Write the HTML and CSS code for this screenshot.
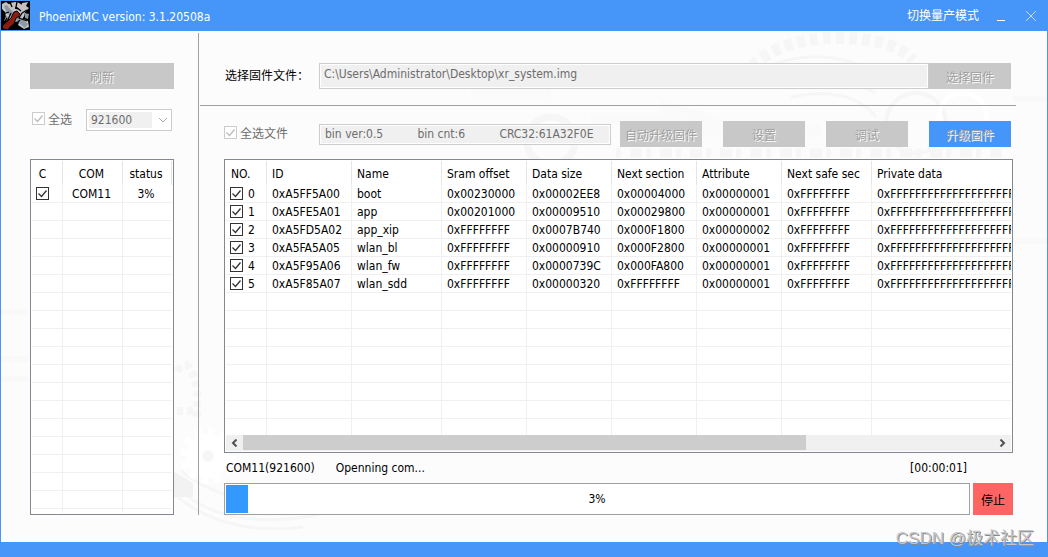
FILE: index.html
```html
<!DOCTYPE html>
<html lang="zh-CN">
<head>
<meta charset="utf-8">
<title>PhoenixMC</title>
<link rel="stylesheet" href="styles.css">
</head>
<body>
<div class="window">
  <header class="titlebar">
    <svg class="app-icon" viewBox="0 0 29 29" aria-hidden="true">
      <rect width="29" height="29" fill="#000"/>
      <circle cx="14" cy="11" r="10" fill="#c4c4c4"/>
      <path d="M1 3l4-2 4 3-1 5-4 2-3-3zM21 2l6-1-2 4 3 2-4 4-4-2zM20 17l7 3 1 6-5 2-6-4z" fill="#bfc3c8"/>
      <path d="M3 5l3-1 2 3 19 16-3 4L6 12zM5 15l3 1-1 3-4 1zM24 12l4 1-1 5-3-1z" fill="#8d97a5"/>
      <path d="M9 1l2 5M16 1l-1 5 5 4M2 13l6-2M10 12l-4 9M21 12l-3 5 8 3M12 26l7-7M14 7l4 1M26 9l-5 3M3 22l3-5" stroke="#000" stroke-width="1.3" fill="none"/>
      <path d="M2 28L1 25 10 17l3-6 3-1 3 3-2 3-2 1-2 6-4 3-2 3z" fill="#8e1b10" stroke="#000"/>
    </svg>
    <h1 class="title">PhoenixMC version: 3.1.20508a</h1>
    <button class="title-btn mode" type="button">切换量产模式</button>
    <button class="title-btn" type="button" aria-label="最小化">
      <svg width="12" height="12" viewBox="0 0 12 12"><path d="M2 10.5h8" stroke="#fff"/></svg>
    </button>
    <button class="title-btn" type="button" aria-label="关闭">
      <svg width="12" height="12" viewBox="0 0 12 12"><path d="M1 1l10 10M11 1L1 11" stroke="#c9d8ea" fill="none"/></svg>
    </button>
  </header>

  <main class="main">
    <svg class="backdrop" viewBox="0 0 1046 511" preserveAspectRatio="xMidYMid slice" aria-hidden="true">
      <g fill="none" stroke="#f6f6f6">
        <path d="M742 45q30-38 95-38 55 0 75 22" stroke-width="12" stroke-dasharray="8 5"/>
        <path d="M770 34q50-18 95 3M790 66q60-12 85 20M745 52q70-22 130 10" stroke-width="3"/>
        <circle cx="915" cy="92" r="30" stroke-width="4"/>
        <circle cx="962" cy="86" r="24" stroke-width="5" stroke="#fff"/>
        <circle cx="550" cy="110" r="24" stroke-width="7"/>
        <path d="M440 38h120M470 60h80M590 88h90M660 74l60 20M700 100h120" stroke-width="12" stroke="#fafafa"/>
        <path d="M615 122h390" stroke-width="9" stroke-dasharray="5 9 12 4"/>
        <path d="M172 452q45 50 145 32M172 462q50 44 130 34M180 440q40 32 110 34" stroke-width="3"/>
        <path d="M176 340q14-18 20 20v30M176 380h18" stroke-width="8" stroke-dasharray="6 4"/>
        <circle cx="207" cy="425" r="14" stroke-width="16" stroke="#fff"/>
        <circle cx="207" cy="425" r="25" stroke-width="6" stroke="#fff" stroke-dasharray="7 6"/>
        <circle cx="207" cy="425" r="5" fill="#f6f6f6"/>
        <path d="M172 440l20 12v14h-20z" fill="#f2f2f2" stroke="none"/>
        <path d="M0 281h28M0 328h28M0 348h28M1012 68h34M1012 210h34" stroke-width="6" stroke="#f9f9f9"/>
      </g>
    </svg>

    <aside class="sidebar">
      <button class="btn" type="button" disabled>刷新</button>
      <div class="port-row">
        <label class="check"><input type="checkbox" checked disabled>全选</label>
        <select class="baud" aria-label="波特率" disabled><option>921600</option></select>
      </div>
      <div class="list">
        <div class="viewport">
          <table class="grid ports">
            <colgroup><col class="c-check"><col class="c-com"><col></colgroup>
            <thead><tr><th>C</th><th>COM</th><th>status</th></tr></thead>
            <tbody>
              <tr><td><input type="checkbox" aria-label="COM11" checked></td><td>COM11</td><td>3%</td></tr>
              <tr><td></td><td></td><td></td></tr><tr><td></td><td></td><td></td></tr>
              <tr><td></td><td></td><td></td></tr><tr><td></td><td></td><td></td></tr>
              <tr><td></td><td></td><td></td></tr><tr><td></td><td></td><td></td></tr>
              <tr><td></td><td></td><td></td></tr><tr><td></td><td></td><td></td></tr>
              <tr><td></td><td></td><td></td></tr><tr><td></td><td></td><td></td></tr>
              <tr><td></td><td></td><td></td></tr><tr><td></td><td></td><td></td></tr>
              <tr><td></td><td></td><td></td></tr><tr><td></td><td></td><td></td></tr>
              <tr><td></td><td></td><td></td></tr><tr><td></td><td></td><td></td></tr>
              <tr><td></td><td></td><td></td></tr><tr><td></td><td></td><td></td></tr>
            </tbody>
          </table>
        </div>
      </div>
    </aside>

    <section class="content">
      <div class="file-row">
        <label class="file-label" for="path">选择固件文件：</label>
        <input class="field path" id="path" type="text" value="C:\Users\Administrator\Desktop\xr_system.img" disabled>
        <button class="btn tool" type="button" disabled>选择固件</button>
      </div>

      <div class="work">
        <div class="tools">
          <label class="check all-files"><input type="checkbox" checked disabled>全选文件</label>
          <input class="field info" type="text" aria-label="固件信息" value="bin ver:0.5          bin cnt:6          CRC32:61A32F0E" disabled>
          <div class="actions">
            <button class="btn tool" type="button" disabled>自动升级固件</button>
            <button class="btn tool" type="button" disabled>设置</button>
            <button class="btn tool" type="button" disabled>调试</button>
            <button class="btn tool primary" type="button" disabled>升级固件</button>
          </div>
        </div>

        <div class="list">
          <div class="viewport">
            <table class="grid files">
              <colgroup><col class="c-no"><col class="c-std"><col class="c-wide"><col class="c-std"><col class="c-std"><col class="c-std"><col class="c-std"><col class="c-wide"><col></colgroup>
              <thead><tr><th>NO.</th><th>ID</th><th>Name</th><th>Sram offset</th><th>Data size</th><th>Next section</th><th>Attribute</th><th>Next safe sec</th><th>Private data</th></tr></thead>
              <tbody>
                <tr><td><label class="num"><input type="checkbox" checked>0</label></td><td>0xA5FF5A00</td><td>boot</td><td>0x00230000</td><td>0x00002EE8</td><td>0x00004000</td><td>0x00000001</td><td>0xFFFFFFFF</td><td>0xFFFFFFFFFFFFFFFFFFFF</td></tr>
                <tr><td><label class="num"><input type="checkbox" checked>1</label></td><td>0xA5FE5A01</td><td>app</td><td>0x00201000</td><td>0x00009510</td><td>0x00029800</td><td>0x00000001</td><td>0xFFFFFFFF</td><td>0xFFFFFFFFFFFFFFFFFFFF</td></tr>
                <tr><td><label class="num"><input type="checkbox" checked>2</label></td><td>0xA5FD5A02</td><td>app_xip</td><td>0xFFFFFFFF</td><td>0x0007B740</td><td>0x000F1800</td><td>0x00000002</td><td>0xFFFFFFFF</td><td>0xFFFFFFFFFFFFFFFFFFFF</td></tr>
                <tr><td><label class="num"><input type="checkbox" checked>3</label></td><td>0xA5FA5A05</td><td>wlan_bl</td><td>0xFFFFFFFF</td><td>0x00000910</td><td>0x000F2800</td><td>0x00000001</td><td>0xFFFFFFFF</td><td>0xFFFFFFFFFFFFFFFFFFFF</td></tr>
                <tr><td><label class="num"><input type="checkbox" checked>4</label></td><td>0xA5F95A06</td><td>wlan_fw</td><td>0xFFFFFFFF</td><td>0x0000739C</td><td>0x000FA800</td><td>0x00000001</td><td>0xFFFFFFFF</td><td>0xFFFFFFFFFFFFFFFFFFFF</td></tr>
                <tr><td><label class="num"><input type="checkbox" checked>5</label></td><td>0xA5F85A07</td><td>wlan_sdd</td><td>0xFFFFFFFF</td><td>0x00000320</td><td>0xFFFFFFFF</td><td>0x00000001</td><td>0xFFFFFFFF</td><td>0xFFFFFFFFFFFFFFFFFFFF</td></tr>
                <tr><td></td><td></td><td></td><td></td><td></td><td></td><td></td><td></td><td></td></tr>
                <tr><td></td><td></td><td></td><td></td><td></td><td></td><td></td><td></td><td></td></tr>
                <tr><td></td><td></td><td></td><td></td><td></td><td></td><td></td><td></td><td></td></tr>
                <tr><td></td><td></td><td></td><td></td><td></td><td></td><td></td><td></td><td></td></tr>
                <tr><td></td><td></td><td></td><td></td><td></td><td></td><td></td><td></td><td></td></tr>
                <tr><td></td><td></td><td></td><td></td><td></td><td></td><td></td><td></td><td></td></tr>
                <tr><td></td><td></td><td></td><td></td><td></td><td></td><td></td><td></td><td></td></tr>
                <tr><td></td><td></td><td></td><td></td><td></td><td></td><td></td><td></td><td></td></tr>
              </tbody>
            </table>
          </div>
          <div class="scrollbar">
            <button class="arrow" type="button" aria-label="向左滚动"><svg width="7" height="8" viewBox="0 0 7 8"><path d="M5.500 .5L2 4l3.500 3.500" fill="none" stroke="#505050" stroke-width="2"/></svg></button>
            <div class="track"><div class="thumb"></div></div>
            <button class="arrow" type="button" aria-label="向右滚动"><svg width="7" height="8" viewBox="0 0 7 8"><path d="M1.500 .5L5 4 1.500 7.500" fill="none" stroke="#505050" stroke-width="2"/></svg></button>
          </div>
        </div>

        <div class="status">
          <span>COM11(921600)</span>
          <span>Openning com...</span>
          <span class="elapsed">[00:00:01]</span>
        </div>
        <div class="run-row">
          <div class="progress" role="progressbar" aria-label="进度" aria-valuenow="3" aria-valuemin="0" aria-valuemax="100">
            <div class="bar" style="width: 3%"></div>
            <span class="percent">3%</span>
          </div>
          <button class="stop" type="button">停止</button>
        </div>
      </div>
    </section>
  </main>
  <footer class="bottom-bar"></footer>
  <div class="watermark">CSDN @极术社区</div>
</div>
</body>
</html>
```

FILE: styles.css
```css
* { box-sizing: border-box; }

body {
  margin: 0;
  font: 12px/16px "DejaVu Sans Condensed", "Noto Sans", "Noto Sans CJK SC", sans-serif;
  color: #000;
}

button, input, select { font: inherit; margin: 0; }

.window {
  position: relative;
  display: flex;
  flex-direction: column;
  height: 100vh;
  min-height: 360px;
  background: #4696fa;
}

/* Title bar */
.titlebar {
  display: flex;
  align-items: center;
  height: 31px;
  padding: 0 11px 0 1px;
  color: #fff;
}
.app-icon { width: 29px; height: 29px; }
.title { flex: 1; margin: 2px 0 0 9px; font-size: 12px; font-weight: normal; }
.title-btn {
  display: flex;
  margin-left: 18px;
  padding: 0;
  border: 0;
  background: none;
  color: #fff;
}
.title-btn.mode { margin-left: 0; }
.title-btn.mode + .title-btn { margin-left: 16px; }

/* Body */
.main {
  position: relative;
  display: flex;
  flex: 1;
  min-height: 0;
  margin: 0 1px;
  padding: 2px 0 27px;
  background: #fcfcfc;
}
.backdrop { position: absolute; inset: 0; width: 100%; height: 100%; }
.sidebar, .content { position: relative; display: flex; flex-direction: column; }
.sidebar {
  width: 198px;
  flex: none;
  padding: 30px 24px 0 29px;
  border-right: 1px solid #a0a0a0;
}
.content { flex: 1; min-width: 0; }

.btn {
  flex: none;
  height: 26px;
  padding: 4px 0 0;
  border: 0;
  background: #c8c8c8;
  color: #a0a0a0;
  text-shadow: 1px 1px #fff;
}
.tool { width: 82px; }
.primary { background: #4696fa; }

input[type="checkbox"] {
  flex: none;
  appearance: none;
  width: 13px;
  height: 13px;
  border: 1px solid #333;
  background: #fff url("data:image/svg+xml,%3Csvg xmlns='http://www.w3.org/2000/svg' viewBox='0 0 11 11'%3E%3Cpath d='M1.500 5.500l3 3 5-6' fill='none' stroke='%23333' stroke-width='1.300'/%3E%3C/svg%3E");
}
input[type="checkbox"]:disabled {
  border-color: #ccc;
  background-image: url("data:image/svg+xml,%3Csvg xmlns='http://www.w3.org/2000/svg' viewBox='0 0 11 11'%3E%3Cpath d='M1.500 5.500l3 3 5-6' fill='none' stroke='%23bbb' stroke-width='1.300'/%3E%3C/svg%3E");
}

.check { display: flex; align-items: center; gap: 3px; color: #6d6d6d; }
.check input { margin-bottom: 4px; }

.port-row {
  display: flex;
  align-items: center;
  justify-content: space-between;
  margin: 20px 2px 28px;
}
.baud {
  appearance: none;
  width: 86px;
  height: 22px;
  padding: 0 4px;
  border: 1px solid #ccc;
  border-radius: 0;
  background:
    url("data:image/svg+xml,%3Csvg xmlns='http://www.w3.org/2000/svg' width='10' height='6'%3E%3Cpath d='M1 1l4 4 4-4' fill='none' stroke='%23aaa'/%3E%3C/svg%3E") right 3px center no-repeat,
    linear-gradient(#f0f0f0, #f0f0f0) 2px 2px / 63px 16px no-repeat,
    #fff;
  color: #6d6d6d;
  opacity: 1;
}

/* Rows of controls */
.file-row {
  display: flex;
  align-items: center;
  margin: 0 31px 0 1px;
  padding: 30px 5px 16px 25px;
  border-bottom: 1px solid #a0a0a0;
}
.file-label { width: 94px; white-space: nowrap; }
.field {
  min-width: 0;
  border: 1px solid #ccc;
  border-radius: 0;
  outline: 1px solid #fff;
  outline-offset: -2px;
  background: #f0f0f0;
  color: #6d6d6d;
}
.path { flex: 1; height: 26px; padding: 0 4px 4px; }
.info { flex: 1; height: 21px; padding: 0 5px; }

.work {
  display: flex;
  flex: 1;
  flex-direction: column;
  min-height: 0;
  padding: 15px 34px 0 25px;
}
.tools { display: flex; align-items: center; margin: 0 2px 12px 0; }
.all-files { width: 95px; }
.actions { display: flex; gap: 21px; margin-left: 9px; }

/* Lists */
.list {
  display: flex;
  flex: 1;
  flex-direction: column;
  min-height: 0;
  padding: 1px;
  border: 1px solid #828790;
  background: #fff;
}
.viewport { flex: 1; min-height: 0; overflow: hidden; }
.grid { width: 100%; table-layout: fixed; border-collapse: separate; border-spacing: 0; line-height: 15px; }
.grid th, .grid td {
  overflow: hidden;
  padding: 2px 0 0 5px;
  border-right: 1px solid #f0f0f0;
  text-align: left;
  font-weight: normal;
  white-space: nowrap;
}
.grid th { height: 24px; padding-top: 3px; border-color: #e5e5e5; }
.grid td { height: 18px; border-bottom: 1px solid #f0f0f0; }
.files th:last-child, .files td:last-child { border-right: 0; }
.ports td:last-child { border-right-color: transparent; }
.grid.ports th, .grid.ports td { padding-left: 0; padding-right: 2px; text-align: center; }
.grid.ports th:first-child, .grid.ports td:first-child { padding-right: 9px; }
.ports input { display: block; margin: 0 auto 2px; }
.num { display: flex; align-items: center; gap: 5px; }
.num input { margin-bottom: 2px; }
.grid.files td:first-child { padding-left: 4px; }
.c-check { width: 31px; }
.c-com { width: 60px; }
.c-no { width: 41px; }
.c-std { width: 85px; }
.c-wide { width: 90px; }

.scrollbar { display: flex; height: 16px; background: #f0f0f0; }
.arrow {
  display: flex;
  align-items: center;
  justify-content: center;
  width: 17px;
  padding: 0;
  border: 0;
  background: none;
}
.track { flex: 1; }
.thumb { width: 75%; height: 15px; background: #cdcdcd; }

/* Status and progress */
.status { display: flex; align-items: center; gap: 21px; height: 30px; padding: 0 46px 0 2px; }
.elapsed { margin-left: auto; }
.run-row { display: flex; gap: 3px; }
.progress {
  position: relative;
  flex: 1;
  height: 32px;
  padding: 1px;
  border: 1px solid #a0a0a0;
  background: #fff;
}
.bar { height: 100%; background: #3399ff; }
.percent {
  position: absolute;
  inset: 0;
  display: flex;
  align-items: center;
  justify-content: center;
}
.stop { width: 40px; height: 32px; padding: 3px 0 0; border: 0; background: #ff6464; color: #000; }

.bottom-bar { height: 15px; }
.watermark {
  position: absolute;
  right: 14px;
  bottom: 6px;
  color: #c4c6ca;
  font: 17px/24px "Liberation Sans", "Noto Sans CJK SC", sans-serif;
  text-shadow: 1px 1px #888;
}
```
